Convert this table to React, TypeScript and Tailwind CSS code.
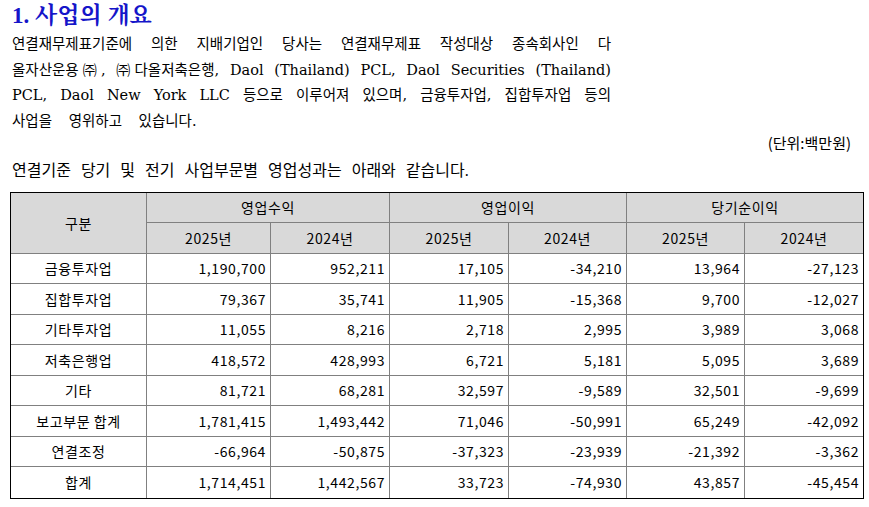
import React from "react";

const rows: [string, string[]][] = [
  ["금융투자업", ["1,190,700", "952,211", "17,105", "-34,210", "13,964", "-27,123"]],
  ["집합투자업", ["79,367", "35,741", "11,905", "-15,368", "9,700", "-12,027"]],
  ["기타투자업", ["11,055", "8,216", "2,718", "2,995", "3,989", "3,068"]],
  ["저축은행업", ["418,572", "428,993", "6,721", "5,181", "5,095", "3,689"]],
  ["기타", ["81,721", "68,281", "32,597", "-9,589", "32,501", "-9,699"]],
  ["보고부문 합계", ["1,781,415", "1,493,442", "71,046", "-50,991", "65,249", "-42,092"]],
  ["연결조정", ["-66,964", "-50,875", "-37,323", "-23,939", "-21,392", "-3,362"]],
  ["합계", ["1,714,451", "1,442,567", "33,723", "-74,930", "43,857", "-45,454"]],
];

const widths = [136, 124, 119, 119, 118, 118, 118];

export default function App() {
  return (
    <div className="w-[869px] h-[507px] bg-white overflow-hidden text-black">
      <div className="pl-[12px] pt-[1px] h-[32px] font-['Liberation_Serif','Noto_Serif_CJK_KR','Noto_Sans_CJK_KR',serif] font-bold text-[23px] leading-[29px] text-[#1515c9]">
        1. 사업의 개요
      </div>
      <div className="pl-[12px] w-[611px] h-[102px] font-['DejaVu_Serif','Noto_Sans_CJK_KR',serif] text-[14.5px]">
        <div className="h-[25.5px] leading-[25.5px] text-justify [text-align-last:justify]">
          연결재무제표기준에 의한 지배기업인 당사는 연결재무제표 작성대상 종속회사인 다
        </div>
        <div className="h-[25.5px] leading-[25.5px] text-justify [text-align-last:justify]">
          올자산운용<span className="text-[14px] -mx-[2px]">㈜</span>, <span className="text-[14px] -mr-[2px]">㈜</span>다올저축은행, Daol (Thailand) PCL, Daol Securities (Thailand)
        </div>
        <div className="h-[25.5px] leading-[25.5px] text-justify [text-align-last:justify]">
          PCL, Daol New York LLC 등으로 이루어져 있으며, 금융투자업, 집합투자업 등의
        </div>
        <div className="h-[25.5px] leading-[25.5px] [word-spacing:12px]">사업을 영위하고 있습니다.</div>
      </div>
      <div className="h-[18px] pr-[18px] text-right font-['Noto_Sans_CJK_KR',sans-serif] text-[15px] leading-[18px]">
        (단위:백만원)
      </div>
      <div className="h-[26px] mt-[6px] pl-[12px] font-['Liberation_Serif','Noto_Sans_CJK_KR',serif] text-[16px] leading-[26px] [word-spacing:6px]">
        연결기준 당기 및 전기 사업부문별 영업성과는 아래와 같습니다.
      </div>
      <div className="mt-[8px] ml-[10px] w-[854px] border border-black">
        <table className="table-fixed w-[852px] border-separate border-spacing-0 font-['Noto_Sans_CJK_KR',sans-serif] text-[14px] tracking-[0.6px]">
          <colgroup>
            {widths.map((w, i) => (
              <col key={i} style={{ width: w }} />
            ))}
          </colgroup>
          <thead>
            <tr className="h-[30px]">
              <td rowSpan={2} className="bg-[#d9d9d9] text-center border-r border-b border-[#808080] p-0">
                구분
              </td>
              <td colSpan={2} className="bg-[#d9d9d9] text-center border-r border-b border-[#808080] p-0">
                영업수익
              </td>
              <td colSpan={2} className="bg-[#d9d9d9] text-center border-r border-b border-[#808080] p-0">
                영업이익
              </td>
              <td colSpan={2} className="bg-[#d9d9d9] text-center border-b border-[#808080] p-0">
                당기순이익
              </td>
            </tr>
            <tr className="h-[31px]">
              {["2025년", "2024년", "2025년", "2024년", "2025년", "2024년"].map((t, i) => (
                <td
                  key={i}
                  className={
                    i === 5
                      ? "bg-[#d9d9d9] text-center border-b border-[#808080] p-0"
                      : "bg-[#d9d9d9] text-center border-r border-b border-[#808080] p-0"
                  }
                >
                  {t}
                </td>
              ))}
            </tr>
          </thead>
          <tbody>
            {rows.map(([label, vals], r) => {
              const last = r === rows.length - 1;
              return (
                <tr key={r} className={r % 2 === 0 ? "h-[30px]" : "h-[31px]"}>
                  <td
                    className={
                      last
                        ? "text-center border-r border-[#808080] p-0"
                        : "text-center border-r border-b border-[#808080] p-0"
                    }
                  >
                    {label}
                  </td>
                  {vals.map((v, c) => {
                    const lastCol = c === vals.length - 1;
                    let cls = "text-right pr-[4px] pl-0 py-0 border-[#808080]";
                    if (!lastCol) cls += " border-r";
                    if (!last) cls += " border-b";
                    return (
                      <td key={c} className={cls}>
                        {v}
                      </td>
                    );
                  })}
                </tr>
              );
            })}
          </tbody>
        </table>
      </div>
    </div>
  );
}
